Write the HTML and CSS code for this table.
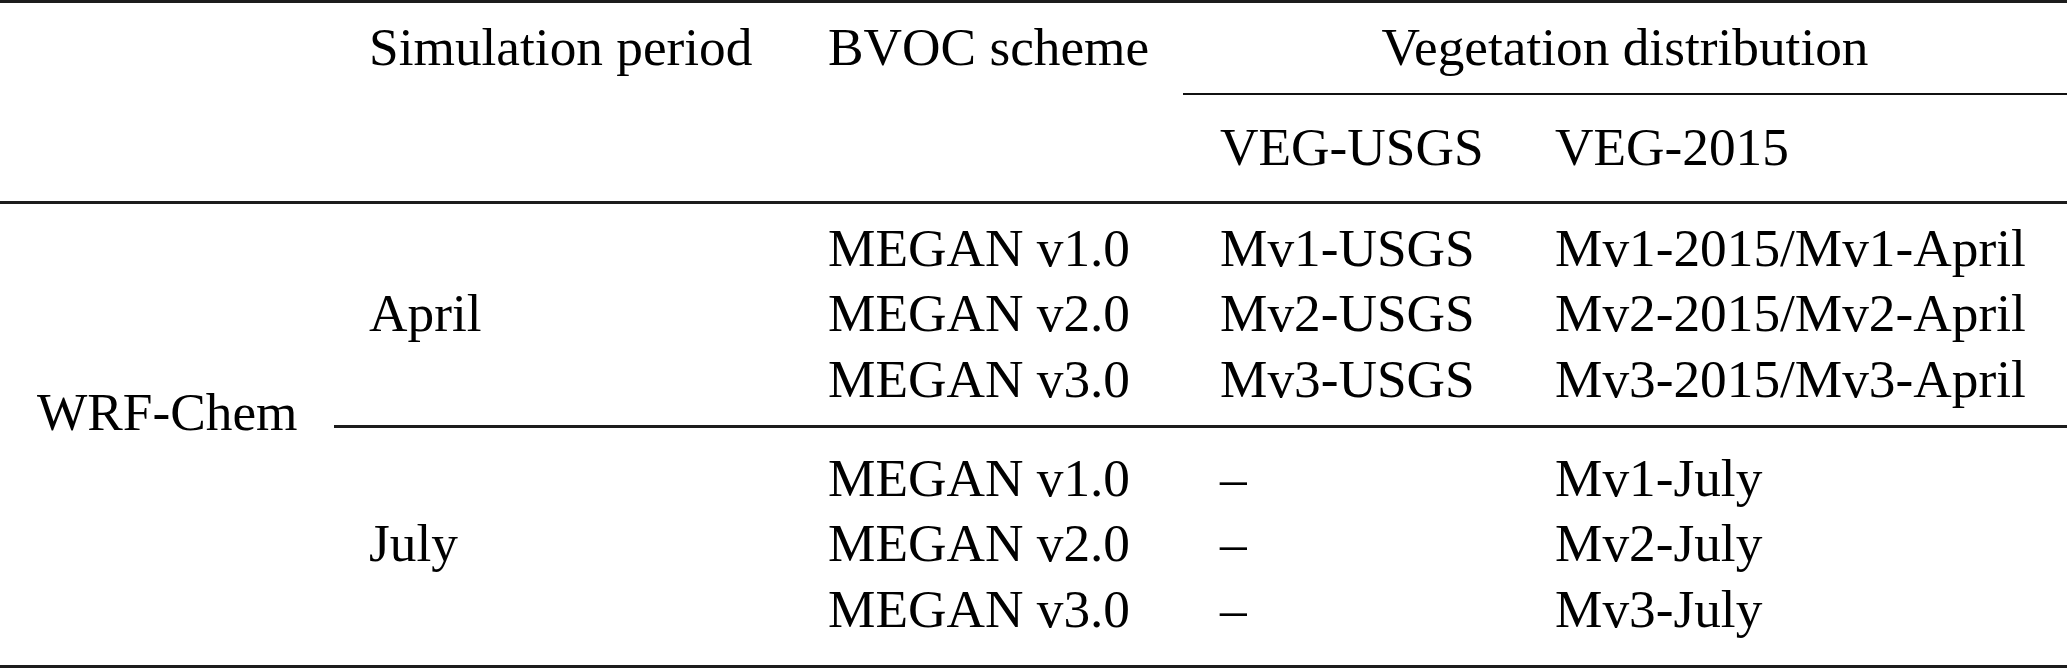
FILE: index.html
```html
<!DOCTYPE html>
<html lang="en">
<head>
<meta charset="utf-8">
<title>Simulation table</title>
<link rel="stylesheet" href="styles.css">
</head>
<body>
<div class="table">
  <div class="head">
    <div class="hc r1"></div>
    <div class="hc r1">Simulation period</div>
    <div class="hc r1">BVOC scheme</div>
    <div class="hc r1 veg">Vegetation distribution</div>
    <div class="hc r2"></div>
    <div class="hc r2"></div>
    <div class="hc r2"></div>
    <div class="hc r2">VEG-USGS</div>
    <div class="hc r2">VEG-2015</div>
  </div>
  <div class="body">
    <div class="model">WRF-Chem</div>
    <div class="groups">
      <div class="group april">
        <div class="period">April</div>
        <div class="cell">MEGAN v1.0</div><div class="cell">Mv1-USGS</div><div class="cell">Mv1-2015/Mv1-April</div>
        <div class="cell">MEGAN v2.0</div><div class="cell">Mv2-USGS</div><div class="cell">Mv2-2015/Mv2-April</div>
        <div class="cell">MEGAN v3.0</div><div class="cell">Mv3-USGS</div><div class="cell">Mv3-2015/Mv3-April</div>
      </div>
      <div class="rule"></div>
      <div class="group july">
        <div class="period">July</div>
        <div class="cell">MEGAN v1.0</div><div class="cell">–</div><div class="cell">Mv1-July</div>
        <div class="cell">MEGAN v2.0</div><div class="cell">–</div><div class="cell">Mv2-July</div>
        <div class="cell">MEGAN v3.0</div><div class="cell">–</div><div class="cell">Mv3-July</div>
      </div>
    </div>
  </div>
</div>
</body>
</html>
```

FILE: styles.css
```css
html, body {
  margin: 0;
  padding: 0;
  background: #ffffff;
}

.table {
  width: 2067px;
  height: 668px;
  box-sizing: border-box;
  border-top: 3px solid #1c1c1c;
  border-bottom: 3px solid #1c1c1c;
  font-family: "Liberation Serif", "Times New Roman", serif;
  font-size: 53.3px;
  color: #000;
  white-space: nowrap;
}

.head {
  display: grid;
  grid-template-columns: 332px 459px 392px 335px 1fr;
}

.hc {
  line-height: 66px;
  padding-left: 37px;
}

.hc.r1 {
  padding-top: 12px;
  padding-bottom: 12px;
}

.hc.r2 {
  padding-top: 20px;
  padding-bottom: 20px;
}

.hc.veg {
  grid-column: 4 / 6;
  padding-left: 0;
  text-align: center;
  border-bottom: 2px solid #111;
}

.body {
  display: grid;
  grid-template-columns: 332px 1fr;
  border-top: 3px solid #1c1c1c;
}

.model {
  line-height: 66px;
  padding-top: 175.7px;
  padding-left: 37px;
}

.groups {
  display: flex;
  flex-direction: column;
}

.group {
  display: grid;
  grid-template-columns: 459px 392px 335px 1fr;
  grid-auto-rows: 65.8px;
  line-height: 65.8px;
}

.group.april {
  padding-top: 11.7px;
  padding-bottom: 11.9px;
}

.group.july {
  padding-top: 17.7px;
  padding-bottom: 21.9px;
}

.period {
  grid-column: 1;
  grid-row: 1 / span 3;
  align-self: center;
  padding-left: 37px;
}

.cell {
  padding-left: 37px;
}

.rule {
  height: 3px;
  margin-left: 2px;
  background: #1c1c1c;
}
```
